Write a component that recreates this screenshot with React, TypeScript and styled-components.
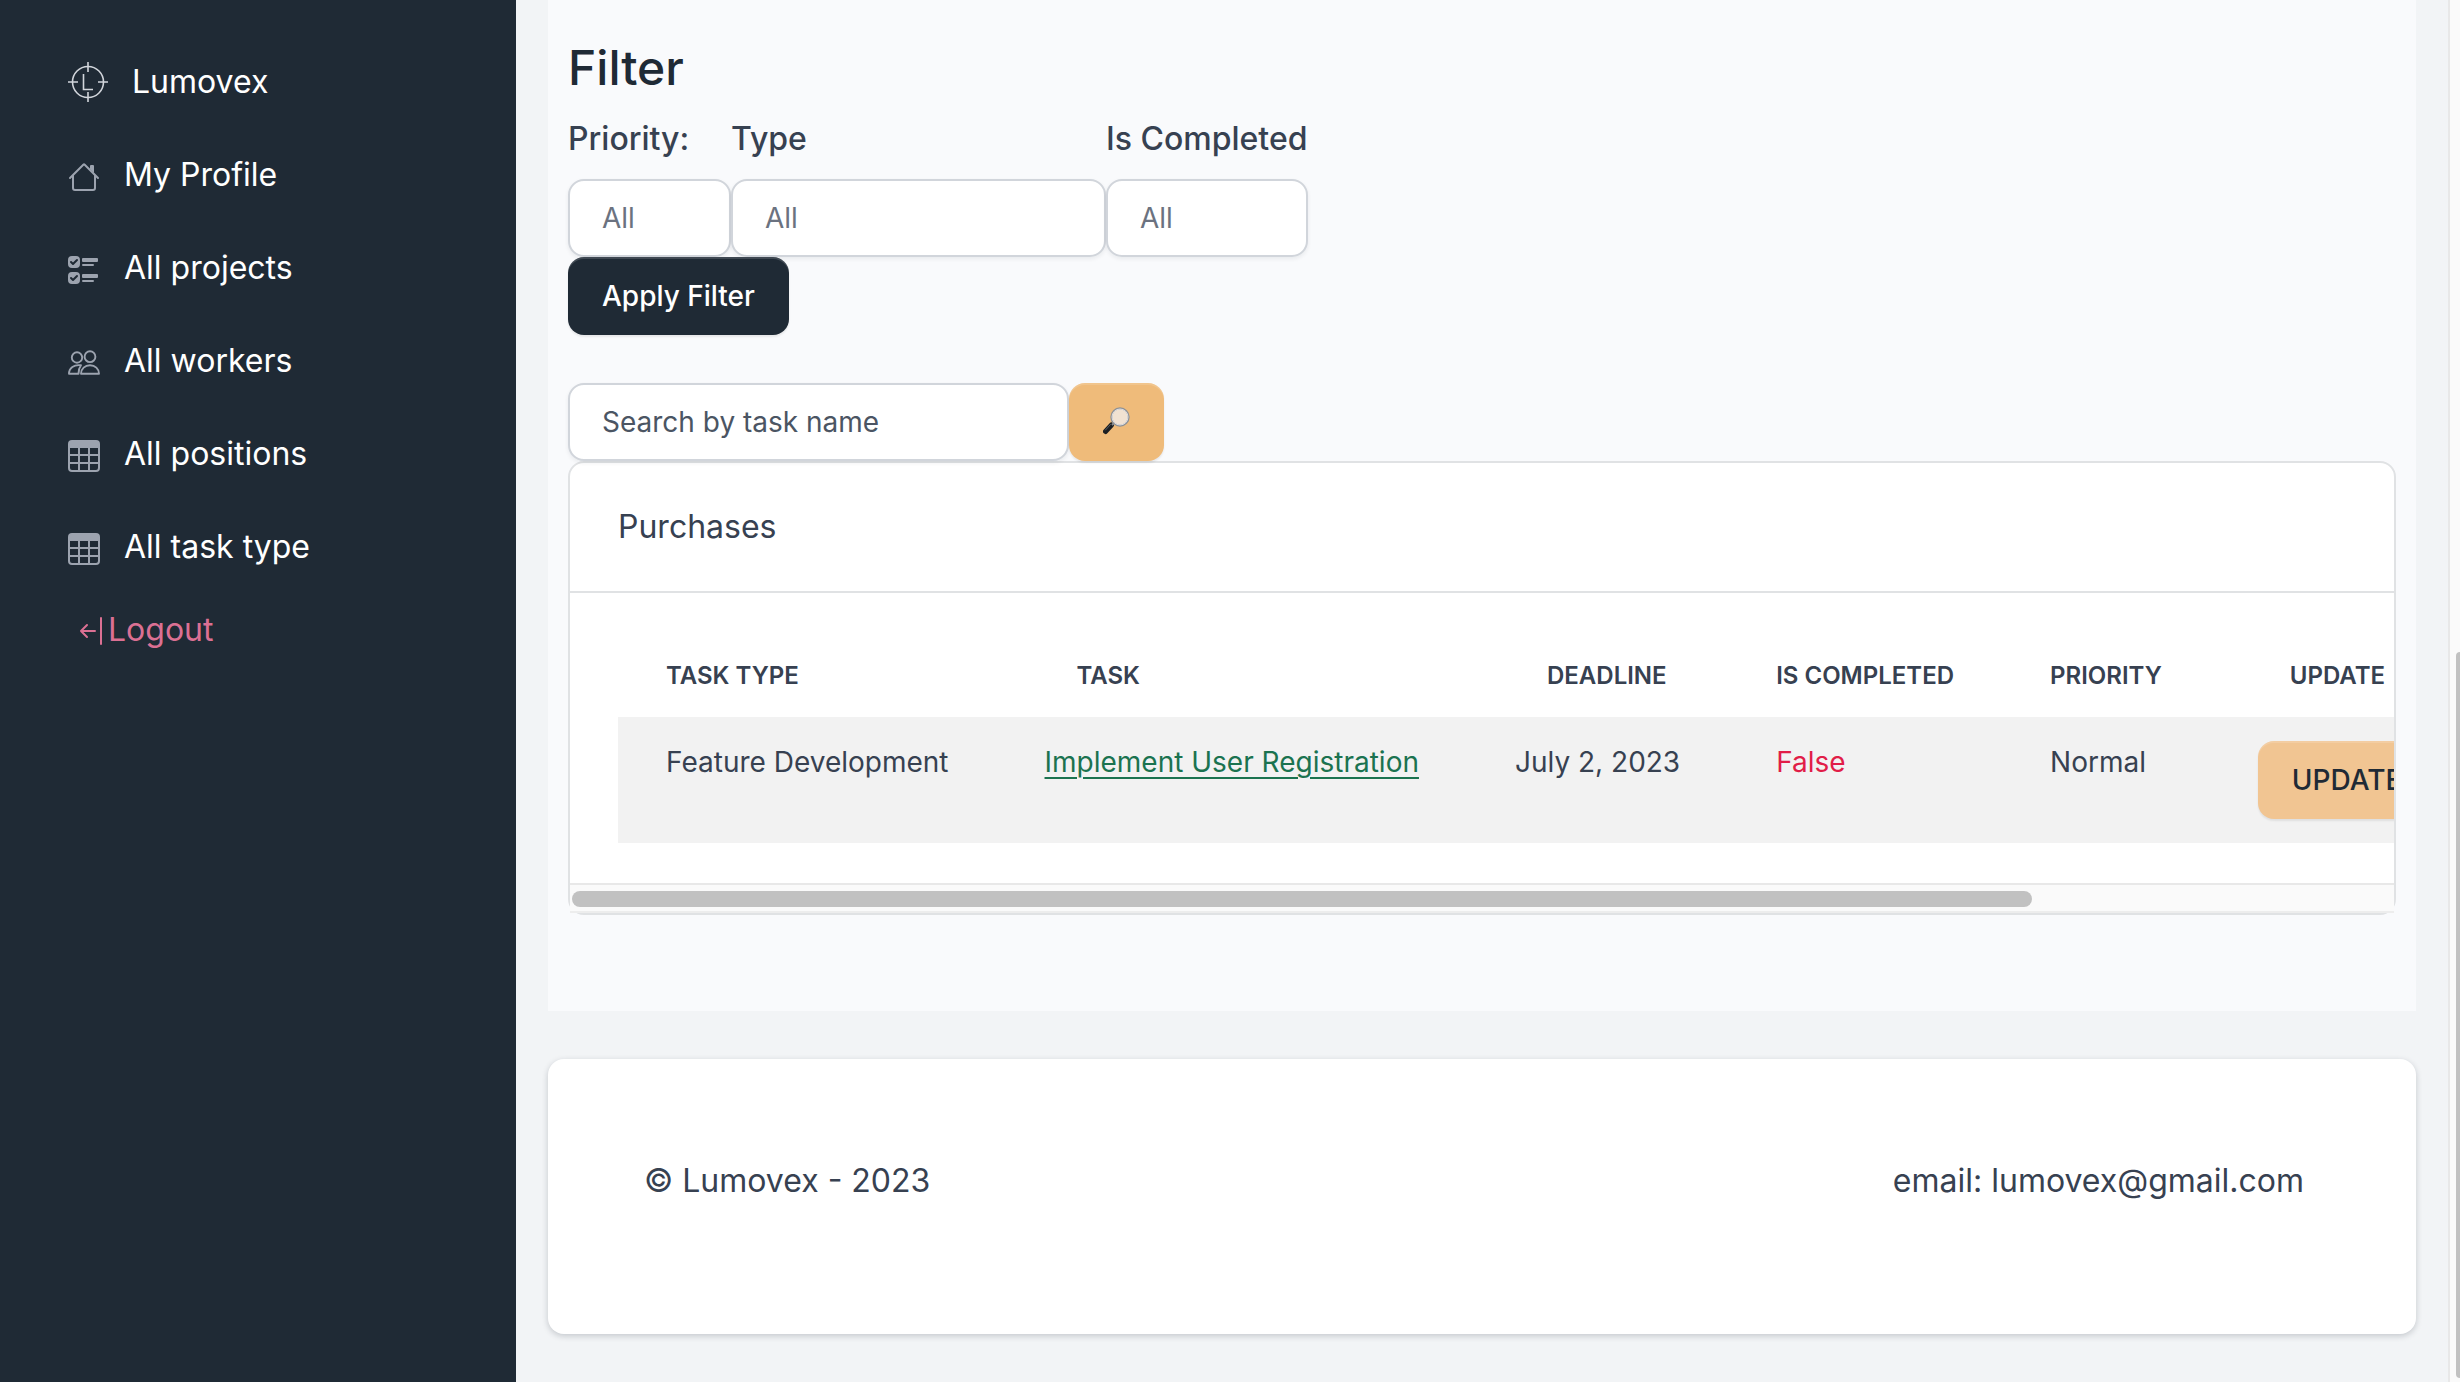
import React from "react";
import styled, { createGlobalStyle } from "styled-components";

const GlobalStyle = createGlobalStyle`
  *, *::before, *::after { box-sizing: border-box; }
  body {
    margin: 0;
    background: #f2f4f6;
    color: #374151;
    font-family: Inter, "Noto Sans", sans-serif;
    font-size: 32px;
    line-height: 48px;
  }
`;

const Shell = styled.div`
  display: grid;
  grid-template-columns: 516px minmax(0, 1fr) 12px;
  min-height: 100vh;
`;

const Sidebar = styled.nav`
  padding: 37px 32px;
  background: #1f2a35;
`;

const NavList = styled.ul`
  display: flex;
  flex-direction: column;
  gap: 4px;
  margin: 0 0 15px;
  padding: 0;
  list-style: none;
`;

const NavLink = styled.a<{ $brand?: boolean }>`
  display: flex;
  align-items: center;
  gap: 24px;
  height: 89px;
  padding: 0 36px;
  color: #fff;
  text-decoration: none;

  svg {
    flex: none;
    color: ${(p) => (p.$brand ? "#d1d5db" : "#9ca3af")};
    margin-top: ${(p) => (p.$brand ? 0 : 4)}px;
  }
`;

const LogoutLink = styled.a`
  display: flex;
  align-items: center;
  padding: 0 44px;
  color: #db7093;
  text-decoration: none;
`;

const Main = styled.main`
  padding: 0 32px 48px;
`;

const Section = styled.section`
  padding: 37px 20px 96px;
  background: #f9fafc;
`;

const Title = styled.h2`
  margin: 0 0 16px;
  color: #1f2a35;
  font-size: 48px;
  font-weight: 500;
  line-height: 62px;
`;

const FilterForm = styled.form`
  display: flex;
  flex-direction: column;
  align-items: flex-start;
  margin-bottom: 48px;
`;

const Fields = styled.div`
  display: flex;
`;

const Field = styled.div<{ $width: number }>`
  display: flex;
  flex-direction: column;
  gap: 16px;
  width: ${(p) => p.$width}px;

  label { font-weight: 500; white-space: nowrap; }
`;

const controlBase = `
  height: 78px;
  margin: 0;
  padding: 0 32px;
  border: 2px solid #d1d5db;
  border-radius: 16px;
  background: #fff;
  box-shadow: 0 2px 4px rgba(17, 24, 39, 0.07);
  font-family: inherit;
  font-size: 28px;
  line-height: 42px;
`;

const Select = styled.select`
  ${controlBase}
  width: 100%;
  color: #6b7280;
  appearance: none;
`;

const SearchInput = styled.input`
  ${controlBase}
  width: 501px;
  color: #4b5563;
  &::placeholder { color: #4b5563; opacity: 1; }
`;

const Button = styled.button<{ $tone: "dark" | "amber" | "peach" }>`
  display: inline-flex;
  align-items: center;
  height: 78px;
  padding: 0 34px;
  border: 0;
  border-radius: 16px;
  background: ${(p) => ({ dark: "#1f2a35", amber: "#efbb7a", peach: "#f1c592" })[p.$tone]};
  color: ${(p) => (p.$tone === "dark" ? "#fff" : "#1f2a35")};
  box-shadow: inset 0 2px 0 rgba(255, 255, 255, 0.15), 0 2px 2px rgba(0, 0, 0, 0.075);
  font-family: inherit;
  font-size: 28px;
  font-weight: 500;
  line-height: 42px;
`;

const SearchForm = styled.form`
  display: flex;
`;

const Card = styled.div`
  border: 2px solid #e0e2e4;
  border-radius: 16px;
  background: #fff;
`;

const CardHeader = styled.div`
  padding: 40px 48px;
  border-bottom: 2px solid #e0e2e4;
`;

const TableViewport = styled.div`
  padding: 40px 0 40px 48px;
  overflow: hidden;
`;

const Table = styled.table`
  border-collapse: collapse;
  white-space: nowrap;
  font-size: 28px;
  line-height: 42px;

  th, td { padding: 24px 48px; text-align: left; vertical-align: top; }
  th { padding-top: 25px; padding-bottom: 23px; font-size: 24px; font-weight: 600; line-height: 36px; }
  tbody tr { background: #f2f2f2; }
`;

const HeadCell = styled.th<{ $indent?: boolean }>`
  && { padding-left: ${(p) => (p.$indent ? 80 : 48)}px; }
`;

const ActionCell = styled.td`
  && { width: 360px; }
`;

const TaskLink = styled.a`
  color: #1b7350;
  text-decoration: underline;
  text-decoration-thickness: 2px;
  text-underline-offset: 5px;
`;

const Incomplete = styled.span`
  color: #e11d48;
`;

const ScrollTrack = styled.div`
  height: 30px;
  padding: 6px 2px;
  border-top: 2px solid #e8e8e8;
  border-bottom: 2px solid #ededed;
  background: #fafafa;
`;

const ScrollThumb = styled.div`
  width: 80.2%;
  height: 16px;
  border-radius: 8px;
  background: #c1c1c1;
`;

const PageTrack = styled.div`
  display: flex;
  flex-direction: column;
  justify-content: flex-end;
  padding: 0 0 4px 6px;
  border-left: 2px solid #e8e8e8;
  background: #fafafa;
`;

const PageThumb = styled.div`
  height: 52.7%;
  border-radius: 8px 0 0 8px;
  background: #c1c1c1;
`;

const Footer = styled.footer`
  display: flex;
  justify-content: space-between;
  margin-top: 48px;
  padding: 98px 112px 129px 96px;
  border-radius: 16px;
  background: #fff;
  box-shadow: 0 2px 6px rgba(17, 24, 39, 0.2);
`;

const LogoIcon = () => (
  <svg width="40" height="40" viewBox="0 0 40 40" fill="none" stroke="currentColor" strokeWidth="1.6" aria-hidden="true">
    <circle cx="20" cy="20" r="15.5" />
    <path d="M20 0v10M20 30v10M0 20h10M30 20h10M15.5 12v15.5H25" />
  </svg>
);

const HouseIcon = () => (
  <svg width="32" height="32" viewBox="0 0 16 16" fill="currentColor" aria-hidden="true">
    <path d="M2 13.5V7h1v6.5a.5.5 0 0 0 .5.5h9a.5.5 0 0 0 .5-.5V7h1v6.5a1.5 1.5 0 0 1-1.5 1.5h-9A1.5 1.5 0 0 1 2 13.5zm11-11V6l-2-2V2.5a.5.5 0 0 1 .5-.5h1a.5.5 0 0 1 .5.5z" />
    <path d="M7.293 1.5a1 1 0 0 1 1.414 0l6.647 6.646a.5.5 0 0 1-.708.708L8 2.207 1.354 8.854a.5.5 0 1 1-.708-.708L7.293 1.5z" />
  </svg>
);

const ChecksIcon = () => (
  <svg width="32" height="32" viewBox="0 0 16 16" fill="currentColor" aria-hidden="true">
    <path d="M7 2.5a.5.5 0 0 1 .5-.5h7a.5.5 0 0 1 .5.5v1a.5.5 0 0 1-.5.5h-7a.5.5 0 0 1-.5-.5v-1zM2 1a2 2 0 0 0-2 2v2a2 2 0 0 0 2 2h2a2 2 0 0 0 2-2V3a2 2 0 0 0-2-2H2zm0 8a2 2 0 0 0-2 2v2a2 2 0 0 0 2 2h2a2 2 0 0 0 2-2v-2a2 2 0 0 0-2-2H2zm.854-3.646a.5.5 0 0 1-.708 0l-1-1a.5.5 0 1 1 .708-.708l.646.647 1.646-1.647a.5.5 0 1 1 .708.708l-2 2zm0 8a.5.5 0 0 1-.708 0l-1-1a.5.5 0 0 1 .708-.708l.646.647 1.646-1.647a.5.5 0 0 1 .708.708l-2 2zM7 10.5a.5.5 0 0 1 .5-.5h7a.5.5 0 0 1 .5.5v1a.5.5 0 0 1-.5.5h-7a.5.5 0 0 1-.5-.5v-1zm0-5a.5.5 0 0 1 .5-.5h5a.5.5 0 0 1 0 1h-5a.5.5 0 0 1-.5-.5zm0 8a.5.5 0 0 1 .5-.5h5a.5.5 0 0 1 0 1h-5a.5.5 0 0 1-.5-.5z" />
  </svg>
);

const PeopleIcon = () => (
  <svg width="32" height="32" viewBox="0 0 32 32" fill="none" stroke="currentColor" strokeWidth="1.9" strokeLinejoin="round" aria-hidden="true">
    <circle cx="9" cy="10.5" r="5.2" />
    <circle cx="22" cy="9.7" r="5.4" />
    <path d="M13 18.3C6 17.300 1 21 1 26.800h9.500c0-3.300.6-6 2.500-8.500zM13 26.800c0-5 4-8.500 9-8.500s9 3.500 9 8.500z" />
  </svg>
);

const TableIcon = () => (
  <svg width="32" height="32" viewBox="0 0 32 32" fill="none" stroke="currentColor" strokeWidth="2" aria-hidden="true">
    <path d="M0 8V4a4 4 0 0 1 4-4h24a4 4 0 0 1 4 4v4z" fill="currentColor" stroke="none" />
    <path d="M1 4v24a3 3 0 0 0 3 3h24a3 3 0 0 0 3-3V4M11 8v23M21 8v23M1 15h30M1 23h30" />
  </svg>
);

const LogoutIcon = () => (
  <svg width="32" height="32" viewBox="0 0 32 32" fill="none" stroke="currentColor" strokeWidth="2" strokeLinecap="round" strokeLinejoin="round" aria-hidden="true">
    <path d="M25 4v26M19 17H5M11 11l-6 6 6 6" />
  </svg>
);

const MagnifierIcon = () => (
  <svg width="27" height="32" viewBox="0 0 27 32" fill="none" aria-hidden="true">
    <path d="M2.500 25.500l6-6.500" stroke="#1c1f23" strokeWidth="5" strokeLinecap="round" />
    <path d="M2.500 24l5-5.500" stroke="#5b6066" strokeWidth="1" strokeLinecap="round" />
    <path d="M9 19l2.500-2.500" stroke="#8b8f94" strokeWidth="2" />
    <circle cx="17" cy="11" r="8.700" fill="#f1e2d2" stroke="#8f9296" strokeWidth="2" />
    <circle cx="17" cy="11" r="8" stroke="#dcdcdf" strokeWidth="1" />
  </svg>
);

const links = [
  { label: "My Profile", Icon: HouseIcon },
  { label: "All projects", Icon: ChecksIcon },
  { label: "All workers", Icon: PeopleIcon },
  { label: "All positions", Icon: TableIcon },
  { label: "All task type", Icon: TableIcon },
];

const stop = (e: React.FormEvent) => e.preventDefault();

export default function App() {
  return (
    <>
      <GlobalStyle />
      <Shell>
        <Sidebar>
          <NavList>
            <li>
              <NavLink href="#" $brand>
                <LogoIcon />
                Lumovex
              </NavLink>
            </li>
            {links.map(({ label, Icon }) => (
              <li key={label}>
                <NavLink href="#">
                  <Icon />
                  {label}
                </NavLink>
              </li>
            ))}
          </NavList>
          <LogoutLink href="#">
            <LogoutIcon />
            Logout
          </LogoutLink>
        </Sidebar>

        <Main>
          <Section>
            <Title>Filter</Title>
            <FilterForm onSubmit={stop}>
              <Fields>
                <Field $width={163}>
                  <label htmlFor="priority">Priority:</label>
                  <Select id="priority"><option>All</option></Select>
                </Field>
                <Field $width={375}>
                  <label htmlFor="type">Type</label>
                  <Select id="type"><option>All</option></Select>
                </Field>
                <Field $width={202}>
                  <label htmlFor="completed">Is Completed</label>
                  <Select id="completed"><option>All</option></Select>
                </Field>
              </Fields>
              <Button type="submit" $tone="dark">Apply Filter</Button>
            </FilterForm>

            <SearchForm onSubmit={stop}>
              <SearchInput type="text" placeholder="Search by task name" aria-label="Search by task name" />
              <Button type="submit" $tone="amber" aria-label="Search">
                <MagnifierIcon />
              </Button>
            </SearchForm>

            <Card>
              <CardHeader>Purchases</CardHeader>
              <TableViewport>
                <Table>
                  <thead>
                    <tr>
                      <HeadCell>TASK TYPE</HeadCell>
                      <HeadCell $indent>TASK</HeadCell>
                      <HeadCell $indent>DEADLINE</HeadCell>
                      <HeadCell>IS COMPLETED</HeadCell>
                      <HeadCell>PRIORITY</HeadCell>
                      <HeadCell $indent>UPDATE</HeadCell>
                    </tr>
                  </thead>
                  <tbody>
                    <tr>
                      <td>Feature Development</td>
                      <td><TaskLink href="#">Implement User Registration</TaskLink></td>
                      <td>July 2, 2023</td>
                      <td><Incomplete>False</Incomplete></td>
                      <td>Normal</td>
                      <ActionCell><Button type="button" $tone="peach">UPDATE</Button></ActionCell>
                    </tr>
                  </tbody>
                </Table>
              </TableViewport>
              <ScrollTrack>
                <ScrollThumb />
              </ScrollTrack>
            </Card>
          </Section>

          <Footer>
            <span>© Lumovex - 2023</span>
            <span>email: lumovex@gmail.com</span>
          </Footer>
        </Main>

        <PageTrack>
          <PageThumb />
        </PageTrack>
      </Shell>
    </>
  );
}
